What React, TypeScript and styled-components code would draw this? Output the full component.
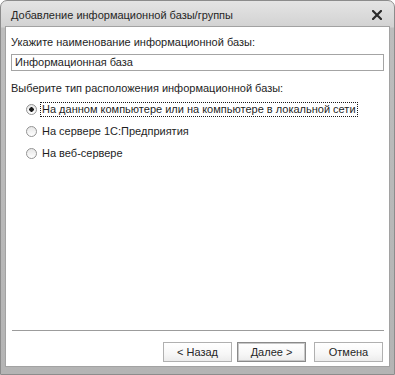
import React from "react";
import styled, { createGlobalStyle } from "styled-components";

const GlobalStyle = createGlobalStyle`
  html, body {
    margin: 0;
    padding: 0;
    background: #ffffff;
  }
  body {
    font-family: "Liberation Sans", Arial, sans-serif;
    font-size: 11px;
    color: #1e1e1e;
  }
`;

type Option = {
  id: string;
  label: string;
};

const options: Option[] = [
  { id: "file", label: "На данном компьютере или на компьютере в локальной сети" },
  { id: "server", label: "На сервере 1С:Предприятия" },
  { id: "web", label: "На веб-сервере" },
];

function CloseIcon() {
  return (
    <svg width="10" height="10" viewBox="0 0 10 10">
      <path d="M1 1 L9 9 M9 1 L1 9" stroke="#2a2a2a" strokeWidth="2.2" strokeLinecap="square" />
    </svg>
  );
}

function App() {
  const selected = "file";

  return (
    <>
      <GlobalStyle />
      <Window>
        <TitleBar>
          <Title>Добавление информационной базы/группы</Title>
          <CloseButton>
            <CloseIcon />
          </CloseButton>
        </TitleBar>
        <Client>
          <Label>Укажите наименование информационной базы:</Label>
          <Input>Информационная база</Input>
          <Label $top={9}>Выберите тип расположения информационной базы:</Label>
          <RadioList>
            {options.map((o) => (
              <RadioRow key={o.id}>
                <Radio $checked={o.id === selected} />
                <RadioText $focused={o.id === selected}>{o.label}</RadioText>
              </RadioRow>
            ))}
          </RadioList>
          <Spacer />
          <Separator />
          <ButtonRow>
            <Button>&lt; Назад</Button>
            <Button $default>Далее &gt;</Button>
            <Button $gap={8}>Отмена</Button>
          </ButtonRow>
        </Client>
      </Window>
    </>
  );
}

const Window = styled.div`
  width: 395px;
  height: 375px;
  box-sizing: border-box;
  border: 1px solid #8c8c8c;
  border-radius: 7px 7px 0 0;
  background: linear-gradient(to bottom, #e4e4e4 0px, #d2d2d2 26px, #bdbdbd 27px, #b4b4b4 100%);
  display: flex;
  flex-direction: column;
  overflow: hidden;
`;

const TitleBar = styled.div`
  height: 26px;
  flex: none;
  display: flex;
  align-items: center;
  justify-content: space-between;
  padding: 0 10px 0 10px;
`;

const Title = styled.div`
  font-size: 11px;
  color: #262626;
  padding-top: 2px;
`;

const CloseButton = styled.div`
  width: 10px;
  height: 10px;
  display: flex;
  margin-top: 2px;
  margin-right: 2px;
`;

const Client = styled.div`
  flex: 1;
  margin: 0 5px 8px 5px;
  background: #ffffff;
  box-shadow: 0 0 0 1px #a2a2a2;
  display: flex;
  flex-direction: column;
  padding: 7px 5px 4px 5px;
`;

const Label = styled.div<{ $top?: number }>`
  line-height: 16px;
  margin-top: ${(p) => p.$top ?? 0}px;
`;

const Input = styled.div`
  margin-top: 4px;
  height: 17px;
  box-sizing: border-box;
  border: 1px solid #a4a4a4;
  padding: 0 3px;
  line-height: 15px;
`;

const RadioList = styled.div`
  display: flex;
  flex-direction: column;
  gap: 6px;
  margin-top: 5px;
  padding-left: 15px;
`;

const RadioRow = styled.div`
  display: flex;
  align-items: center;
  height: 16px;
`;

const Radio = styled.span<{ $checked?: boolean }>`
  width: 11px;
  height: 11px;
  box-sizing: border-box;
  border-radius: 50%;
  border: 1px solid #939393;
  background: radial-gradient(circle at 50% 50%, #1a1a1a 0 2px, transparent 2.5px),
    linear-gradient(to bottom, #e6e6e6, #ffffff);
  background-size: ${(p) => (p.$checked ? "auto, auto" : "0 0, auto")};
  background-repeat: no-repeat;
  margin-right: 4px;
  flex: none;
`;

const RadioText = styled.span<{ $focused?: boolean }>`
  line-height: 13px;
  padding: 0 1px;
  outline: ${(p) => (p.$focused ? "1px dotted #1a1a1a" : "none")};
`;

const Spacer = styled.div`
  flex: 1;
`;

const Separator = styled.div`
  height: 1px;
  background: #9c9c9c;
  margin-left: 1px;
`;

const ButtonRow = styled.div`
  display: flex;
  justify-content: flex-end;
  gap: 5px;
  margin-top: 11px;
  padding-right: 1px;
`;

const Button = styled.div<{ $default?: boolean; $gap?: number }>`
  width: 69px;
  height: 20px;
  box-sizing: border-box;
  display: flex;
  align-items: center;
  justify-content: center;
  margin-left: ${(p) => (p.$gap ? p.$gap - 5 : 0)}px;
  border: 1px solid ${(p) => (p.$default ? "#8a8a8a" : "#b0b0b0")};
  box-shadow: ${(p) => (p.$default ? "inset 0 0 0 1px #c8c8c8" : "none")};
  background: linear-gradient(to bottom, #ffffff 0%, #f7f7f7 60%, #ececec 100%);
  color: #262626;
  font-size: 11px;
`;

export default App;
